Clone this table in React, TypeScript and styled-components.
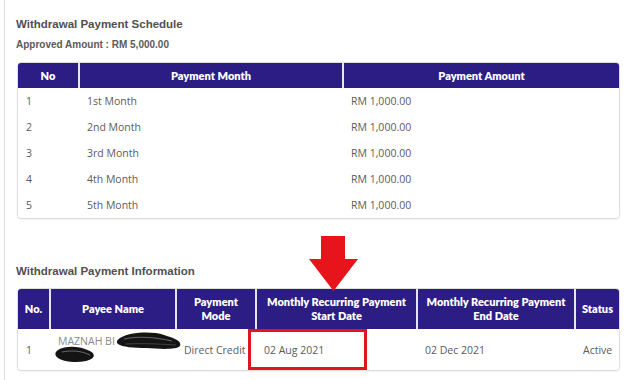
import React from 'react';
import styled, { createGlobalStyle } from 'styled-components';

const GlobalStyle = createGlobalStyle`
  html, body {
    margin: 0;
    padding: 0;
    background: #ffffff;
  }
  body {
    font-family: 'Open Sans', 'Liberation Sans', sans-serif;
    color: #555555;
  }
`;

const schedule = [
  { no: 1, month: '1st Month', amount: 'RM 1,000.00' },
  { no: 2, month: '2nd Month', amount: 'RM 1,000.00' },
  { no: 3, month: '3rd Month', amount: 'RM 1,000.00' },
  { no: 4, month: '4th Month', amount: 'RM 1,000.00' },
  { no: 5, month: '5th Month', amount: 'RM 1,000.00' },
];

// hand-drawn redaction marks over the payee name
const Scribble: React.FC = () => (
  <ScribbleSvg width="70" height="34" viewBox="0 0 70 34">
    <path
      d="M4 5 C14 -1, 36 -2, 48 2 C58 5, 66 8, 64 13 C60 17, 44 16, 30 15 C18 15, 6 14, 2 11 C0 9, 1 7, 4 5 Z"
      fill="#141414"
    />
    <path d="M8 6 C22 3, 38 4, 56 8" stroke="#6a6a6a" strokeWidth="1" fill="none" />
    <path d="M10 11 C26 10, 44 11, 60 12" stroke="#4a4a4a" strokeWidth="0.8" fill="none" />
    <path
      d="M-58 17 C-50 12, -36 13, -26 18 C-20 21, -21 26, -30 28 C-40 30, -52 29, -58 25 C-62 22, -61 19, -58 17 Z"
      fill="#141414"
    />
    <path d="M-54 19 C-44 17, -34 18, -26 22" stroke="#6a6a6a" strokeWidth="1" fill="none" />
  </ScribbleSvg>
);

const App: React.FC = () => {
  return (
    <>
      <GlobalStyle />
      <Page>
        <Title>Withdrawal Payment Schedule</Title>
        <Subtitle>Approved Amount : RM 5,000.00</Subtitle>
        <TableBox>
          <Table>
            <colgroup>
              <col style={{ width: 61 }} />
              <col style={{ width: 264 }} />
              <col />
            </colgroup>
            <thead>
              <tr>
                <Th height={25}>No</Th>
                <Th height={25}>Payment Month</Th>
                <Th height={25}>Payment Amount</Th>
              </tr>
            </thead>
            <tbody>
              {schedule.map((row) => (
                <tr key={row.no}>
                  <Td height={26}>{row.no}</Td>
                  <Td height={26}>{row.month}</Td>
                  <Td height={26}>{row.amount}</Td>
                </tr>
              ))}
            </tbody>
          </Table>
        </TableBox>

        <InfoSection>
          <Title>Withdrawal Payment Information</Title>
          <Arrow width="50" height="56" viewBox="0 0 50 56">
            <polygon points="12,0 36,0 36,23 49,23 24.5,55 0,23 12,23" fill="#e8141c" />
          </Arrow>
          <TableBox>
            <Table>
              <colgroup>
                <col style={{ width: 32 }} />
                <col style={{ width: 126 }} />
                <col style={{ width: 80 }} />
                <col style={{ width: 161 }} />
                <col style={{ width: 158 }} />
                <col />
              </colgroup>
              <thead>
                <tr>
                  <Th height={40}>No.</Th>
                  <Th height={40}>Payee Name</Th>
                  <Th height={40}>
                    Payment
                    <br />
                    Mode
                  </Th>
                  <Th height={40}>
                    Monthly Recurring Payment
                    <br />
                    Start Date
                  </Th>
                  <Th height={40}>
                    Monthly Recurring Payment
                    <br />
                    End Date
                  </Th>
                  <Th height={40}>Status</Th>
                </tr>
              </thead>
              <tbody>
                <tr>
                  <Td height={41}>1</Td>
                  <NameCell>
                    MAZNAH BI
                    <Scribble />
                  </NameCell>
                  <Td height={41}>Direct Credit</Td>
                  <HighlightCell height={41}>
                    02 Aug 2021
                    <RedBox />
                  </HighlightCell>
                  <Td height={41}>02 Dec 2021</Td>
                  <Td height={41}>Active</Td>
                </tr>
              </tbody>
            </Table>
          </TableBox>
        </InfoSection>
      </Page>
    </>
  );
};

const Page = styled.div`
  margin-left: 4px;
  min-height: 380px;
  box-sizing: border-box;
  border-left: 1px solid #dcdcdc;
  padding: 17px 10px 0 11px;
`;

const Title = styled.div`
  font-family: 'Liberation Sans', Arial, sans-serif;
  font-weight: bold;
  font-size: 11.5px;
  line-height: 14px;
  color: #505050;
`;

const Subtitle = styled.div`
  margin-top: 7px;
  font-family: 'Liberation Sans', Arial, sans-serif;
  font-weight: bold;
  font-size: 10px;
  line-height: 14px;
  color: #5a5a5a;
`;

const TableBox = styled.div`
  margin: 10px 0 0 1px;
  border: 1px solid #dedede;
  border-radius: 4px;
  overflow: hidden;
  box-shadow: 0 1px 2px rgba(0, 0, 0, 0.06);
`;

const Table = styled.table`
  width: 100%;
  border-collapse: collapse;
  table-layout: fixed;
`;

const Th = styled.th<{ height: number }>`
  height: ${(p) => p.height}px;
  padding: 0 4px;
  background: #2c1d84;
  color: #ffffff;
  font-family: Lato, 'Open Sans', sans-serif;
  font-weight: 800;
  font-size: 11px;
  line-height: 14px;
  text-align: center;
  border-left: 2px solid #e6e4f0;
  &:first-child {
    border-left: none;
  }
`;

const Td = styled.td<{ height?: number }>`
  height: ${(p) => (p.height ? `${p.height}px` : 'auto')};
  padding: 0 8px;
  font-size: 10.5px;
  color: #5b5b5b;
  vertical-align: middle;
  white-space: nowrap;
`;

const NameCell = styled(Td)`
  position: relative;
  vertical-align: top;
  padding-top: 5px;
  color: #8a8a8a;
`;

const ScribbleSvg = styled.svg`
  position: absolute;
  left: 66px;
  top: 4px;
  overflow: visible;
`;

const HighlightCell = styled(Td)`
  position: relative;
`;

const RedBox = styled.div`
  position: absolute;
  left: -8px;
  top: 0;
  width: 119px;
  height: 41px;
  box-sizing: border-box;
  border: 3px solid #e0161f;
`;

const InfoSection = styled.div`
  position: relative;
  margin-top: 45px;
`;

const Arrow = styled.svg`
  position: absolute;
  left: 293px;
  top: -28px;
`;

export default App;
